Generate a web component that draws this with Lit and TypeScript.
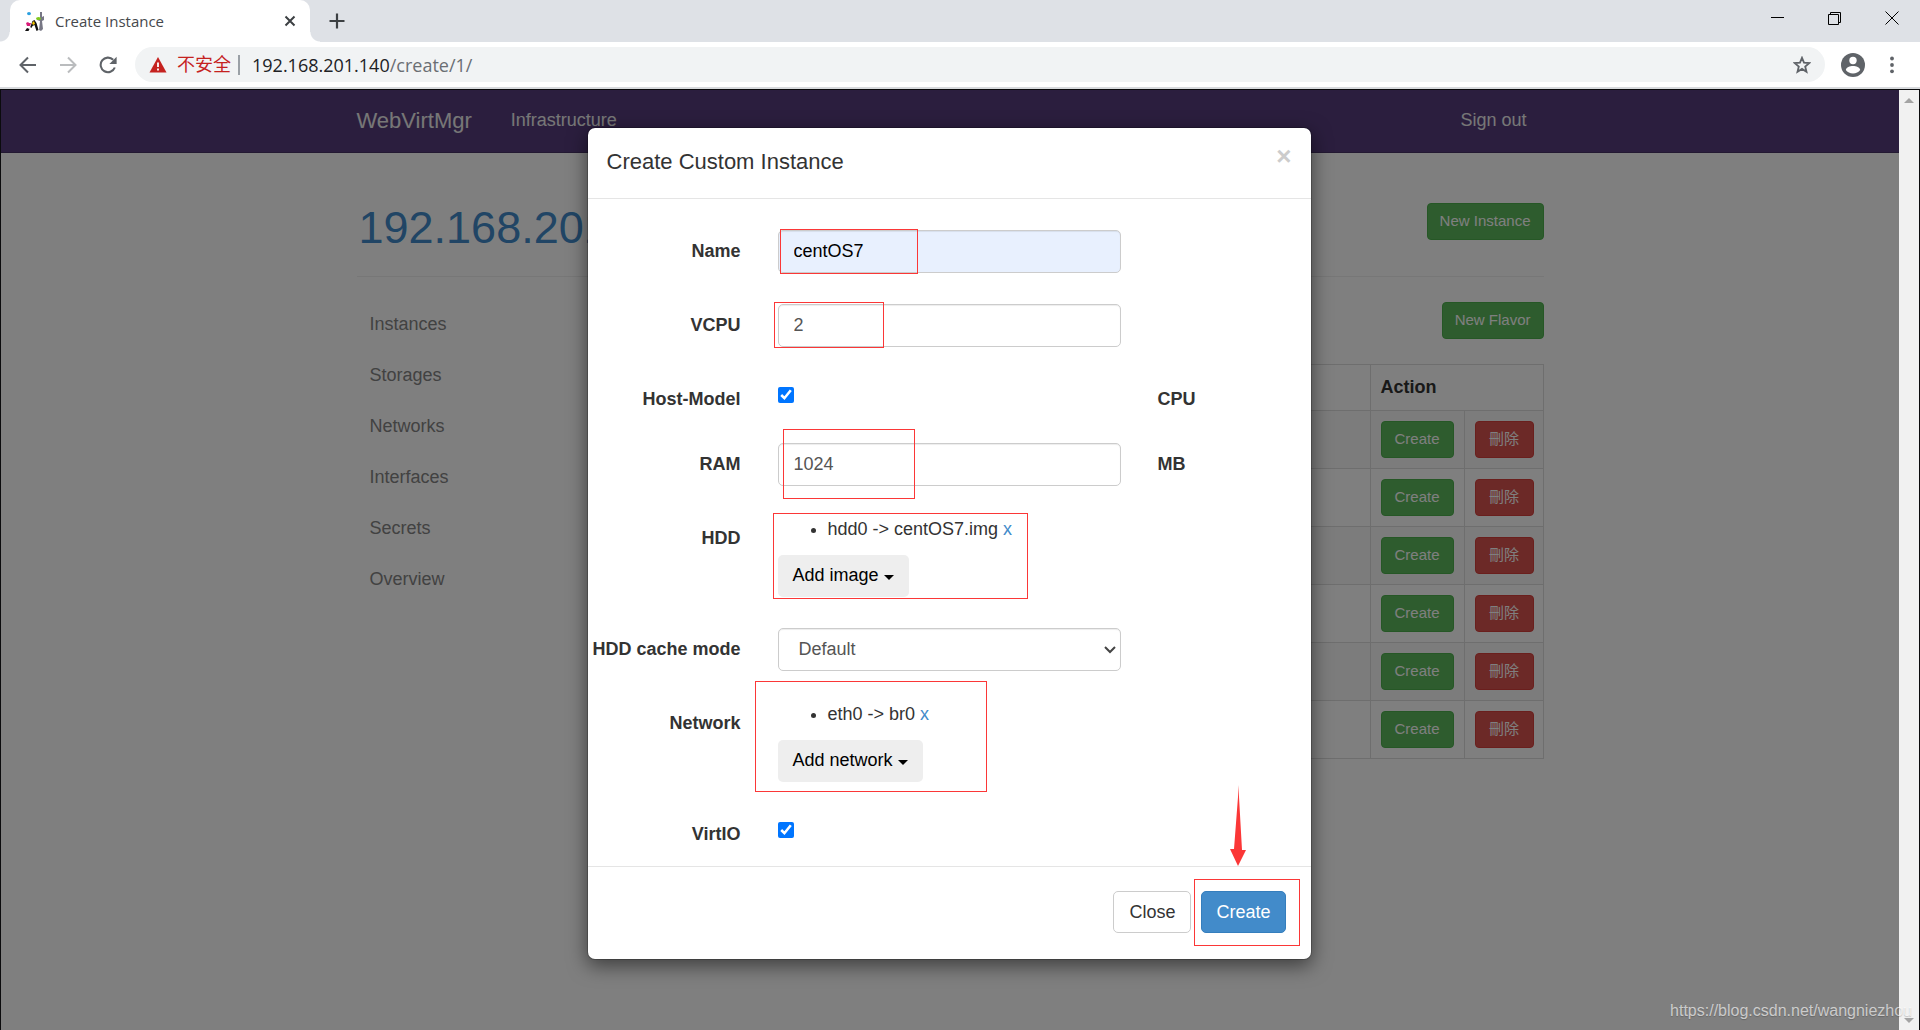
import { LitElement, html, css } from "lit";
import { customElement, state } from "lit/decorators.js";

const SECTIONS = ["Instances", "Storages", "Networks", "Interfaces", "Secrets", "Overview"];
const FLAVORS = [1, 2, 3, 4, 5, 6];

@customElement("browser-chrome")
export class BrowserChrome extends LitElement {
  static styles = css`
    :host {
      display: block;
      flex: none;
      font-family: "Open Sans", "Noto Sans CJK SC", sans-serif;
    }
    button {
      border: 0;
      padding: 0;
      background: none;
      display: flex;
      align-items: center;
      justify-content: center;
      color: #5f6368;
    }
    svg {
      display: block;
    }
    .strip {
      display: flex;
      height: 42px;
      background: #dee1e6;
    }
    .flare {
      width: 10px;
      background: radial-gradient(circle at 0 0, transparent 9px, #fff 10px) 0 100% / 10px 10px no-repeat;
      align-self: stretch;
    }
    .flare.right {
      background-image: radial-gradient(circle at 100% 0, transparent 9px, #fff 10px);
    }
    .tab {
      display: flex;
      align-items: center;
      width: 300px;
      padding: 0 12px 0 14px;
      box-sizing: border-box;
      background: #fff;
      border-radius: 10px 10px 0 0;
      color: #45484c;
      font-size: 15px;
    }
    .title {
      flex: 1;
      padding-left: 10px;
    }
    .close {
      width: 16px;
      height: 16px;
    }
    .plus {
      width: 34px;
    }
    .controls {
      display: flex;
      margin-left: auto;
      height: 36px;
    }
    .controls button {
      width: 57px;
      color: #000;
    }
    .bar {
      display: flex;
      align-items: center;
      padding: 5px 9px 5px 8px;
      background: #fff;
      border-bottom: 2px solid #d8dadd;
    }
    .bar > button {
      width: 40px;
      height: 35px;
    }
    .bar > .menu {
      width: 38px;
    }
    .forward {
      color: #babcbe;
    }
    .omnibox {
      display: flex;
      align-items: center;
      flex: 1;
      height: 35px;
      margin: 0 8px 0 7px;
      padding: 0 14px;
      border-radius: 18px;
      background: #f1f3f4;
      font-size: 18px;
    }
    .warn {
      color: #c5221f;
      padding: 0 7px 0 10px;
      line-height: 25px;
    }
    .url {
      flex: 1;
      padding-left: 12px;
      border-left: 2px solid #9aa0a6;
      line-height: 20px;
      color: #202124;
    }
    .path {
      color: #6a6e73;
    }
  `;

  render() {
    return html`
      <div class="strip">
        <div class="flare"></div>
        <div class="tab">
          <svg width="21" height="21" viewBox="0 0 21 21" aria-hidden="true">
            <path d="M16 1l2 0v5l2-1v4l-2 1 1 8-2 2-2-1 1-9-3-1v-2l3 1z" fill="#777785" />
            <ellipse cx="5" cy="2.600" rx="2" ry="1.600" fill="#2ba0e0" />
            <ellipse cx="14.500" cy="7.500" rx="2.500" ry="1.500" fill="#82c91e" />
            <path d="M2 12l2-1 1 1 2 0-1 3-3 0z" fill="#d81b78" />
            <path d="M5.500 18l3-8 2-1 2 3 2 7-2 1-2-6-2 1-1 2-1-1-2 4H1l2-3z" fill="#111" />
            <path d="M8 12l2-2 1 3-2 1z" fill="#f2c400" />
          </svg>
          <span class="title">Create Instance</span>
          <button class="close" aria-label="Close tab">
            <svg width="12" height="12" viewBox="0 0 12 12"><path d="M1.500 1.500l9 9M10.500 1.500l-9 9" stroke="#3c4043" stroke-width="2" /></svg>
          </button>
        </div>
        <div class="flare right"></div>
        <button class="plus" aria-label="New tab">
          <svg width="16" height="16" viewBox="0 0 16 16"><path d="M8 0.500v15M0.500 8h15" stroke="#3c4043" stroke-width="2.200" /></svg>
        </button>
        <div class="controls">
          <button aria-label="Minimize"><svg width="13" height="13"><path d="M0 5.500h13" stroke="currentColor" /></svg></button>
          <button aria-label="Restore">
            <svg width="13" height="13" fill="none" stroke="currentColor"><path d="M0.500 2.500h10v10h-10zM2.500 2.500v-2h10v10h-2" /></svg>
          </button>
          <button aria-label="Close window"><svg width="14" height="14"><path d="M0.500 0.500l13 13M13.500 0.500l-13 13" stroke="currentColor" /></svg></button>
        </div>
      </div>
      <div class="bar">
        <button aria-label="Back">
          <svg width="18" height="18" viewBox="0 0 18 18" fill="none" stroke="currentColor" stroke-width="2"><path d="M17 9H2M9 1.500L1.500 9 9 16.500" /></svg>
        </button>
        <button class="forward" aria-label="Forward">
          <svg width="18" height="18" viewBox="0 0 18 18" fill="none" stroke="currentColor" stroke-width="2"><path d="M1 9h15M9 1.500L16.500 9 9 16.500" /></svg>
        </button>
        <button aria-label="Reload">
          <svg width="18" height="18" viewBox="0 0 18 18"><path d="M15.800 11.500A7.300 7.300 0 1 1 14.200 3.800" fill="none" stroke="currentColor" stroke-width="2.100" /><path d="M17.600 0.800v7.200h-7.200z" fill="currentColor" /></svg>
        </button>
        <div class="omnibox">
          <svg width="18" height="16" viewBox="0 0 18 16"><path d="M9 0l8.500 15.500H.5z" fill="#c5221f" /><path d="M9 5.500v4.500M9 11.500v2" stroke="#fff" stroke-width="1.800" /></svg>
          <span class="warn">不安全</span>
          <span class="url">192.168.201.140<span class="path">/create/1/</span></span>
          <button aria-label="Bookmark">
            <svg width="18" height="18" viewBox="0 0 18 18"><path d="M9 1.800l2 4.900 5.200.4-4 3.400 1.300 5.200L9 12.900l-4.500 2.800 1.300-5.200-4-3.400 5.200-.4z" fill="none" stroke="currentColor" stroke-width="1.800" /></svg>
          </button>
        </div>
        <button aria-label="Profile">
          <svg width="24" height="24" viewBox="0 0 24 24"><circle cx="12" cy="12" r="12" fill="currentColor" /><circle cx="12" cy="7.500" r="3.700" fill="#fff" /><path d="M4.800 17c.4-2.700 4-4 7.200-4s6.800 1.300 7.200 4c-1.600 2.200-4.200 3.500-7.200 3.500S6.400 19.200 4.800 17z" fill="#fff" /></svg>
        </button>
        <button class="menu" aria-label="Menu">
          <svg width="4" height="18" viewBox="0 0 4 18" fill="currentColor"><circle cx="2" cy="2.500" r="1.900" /><circle cx="2" cy="9" r="1.900" /><circle cx="2" cy="15.300" r="1.900" /></svg>
        </button>
      </div>
    `;
  }
}

@customElement("instance-dialog")
export class InstanceDialog extends LitElement {
  @state() private hostModel = true;
  @state() private virtio = true;

  static styles = css`
    :host {
      display: block;
      position: relative;
      box-sizing: border-box;
      width: 725px;
      max-width: 100%;
      border: 1px solid rgba(0, 0, 0, 0.2);
      border-radius: 8px;
      background: #fff;
      background-clip: padding-box;
      box-shadow: 0 6px 19px rgba(0, 0, 0, 0.5);
      color: #333;
    }
    header {
      display: flex;
      justify-content: space-between;
      align-items: flex-start;
      padding: 18px 19px 21px;
      border-bottom: 1px solid #e5e5e5;
    }
    h4 {
      margin: 0;
      font-size: 22px;
      font-weight: 500;
      line-height: 31px;
    }
    button,
    input,
    select {
      font: inherit;
      box-sizing: border-box;
    }
    .dismiss {
      border: 0;
      padding: 0;
      background: none;
      color: #ccc;
      font-size: 26px;
      font-weight: bold;
      line-height: 20px;
    }
    form {
      display: flex;
      flex-direction: column;
      gap: 31px;
      padding: 31px 0 19px;
    }
    .group {
      display: grid;
      grid-template-columns: 153px 343px 1fr;
      column-gap: 37px;
      align-items: start;
    }
    .label {
      padding-top: 9px;
      line-height: 25px;
      font-weight: bold;
      text-align: right;
      white-space: nowrap;
    }
    .unit {
      text-align: left;
    }
    .control {
      display: block;
      width: 100%;
      height: 43px;
      padding: 0 15px;
      border: 1px solid #ccc;
      border-radius: 5px;
      background: #fff;
      box-shadow: inset 0 1px 1px rgba(0, 0, 0, 0.075);
      color: #555;
    }
    .filled {
      background: #e8f0fe;
      color: #000;
    }
    .select {
      display: grid;
      align-items: center;
    }
    .select > * {
      grid-area: 1 / 1;
    }
    .select select {
      appearance: none;
      padding: 0 20px;
    }
    .select svg {
      justify-self: end;
      margin-right: 5px;
      pointer-events: none;
    }
    .check {
      width: 16px;
      height: 16px;
      margin: 9px 0 0;
      accent-color: #0075ff;
    }
    ul {
      margin: 0 0 13px;
      padding-left: 50px;
      line-height: 25px;
    }
    a {
      color: #428bca;
      text-decoration: none;
    }
    .drop {
      display: inline-flex;
      align-items: center;
      gap: 5px;
      height: 42px;
      padding: 0 15px 2px;
      border: 0;
      border-radius: 5px;
      background: #eee;
      color: #000;
    }
    .caret {
      border-top: 5px solid;
      border-left: 5px solid transparent;
      border-right: 5px solid transparent;
      margin-top: 4px;
    }
    footer {
      display: flex;
      justify-content: flex-end;
      gap: 10px;
      padding: 24px 25px 26px;
      border-top: 1px solid #e5e5e5;
    }
    .btn {
      height: 42px;
      padding: 0 15px;
      border: 1px solid #ccc;
      border-radius: 5px;
      background: #fff;
      color: #333;
    }
    .primary {
      padding: 0 14px;
      border-color: #357ebd;
      background: #428bca;
      color: #fff;
    }
    .mark {
      position: absolute;
      box-sizing: border-box;
      border: 1px solid #fb3737;
      pointer-events: none;
    }
    .mark-name {
      left: 192px;
      top: 101px;
      width: 138px;
      height: 45px;
    }
    .mark-vcpu {
      left: 186px;
      top: 174px;
      width: 110px;
      height: 46px;
    }
    .mark-ram {
      left: 195px;
      top: 301px;
      width: 132px;
      height: 70px;
    }
    .mark-hdd {
      left: 185px;
      top: 385px;
      width: 255px;
      height: 86px;
    }
    .mark-network {
      left: 167px;
      top: 553px;
      width: 232px;
      height: 111px;
    }
    .mark-create {
      right: 11px;
      bottom: 13px;
      width: 106px;
      height: 67px;
    }
    .arrow {
      position: absolute;
      right: 65px;
      bottom: 93px;
    }
  `;

  render() {
    return html`
      <header>
        <h4>Create Custom Instance</h4>
        <button class="dismiss" aria-label="Dismiss">×</button>
      </header>
      <form @submit=${(e: Event) => e.preventDefault()}>
        <div class="group">
          <label class="label" for="name">Name</label>
          <input class="control filled" id="name" type="text" value="centOS7" />
        </div>
        <div class="group">
          <label class="label" for="vcpu">VCPU</label>
          <input class="control" id="vcpu" type="text" value="2" />
        </div>
        <div class="group">
          <label class="label" for="host">Host-Model</label>
          <input class="check" id="host" type="checkbox" .checked=${this.hostModel}
            @change=${() => (this.hostModel = !this.hostModel)} />
          <span class="label unit">CPU</span>
        </div>
        <div class="group">
          <label class="label" for="ram">RAM</label>
          <input class="control" id="ram" type="text" value="1024" />
          <span class="label unit">MB</span>
        </div>
        <div class="group">
          <label class="label" for="hdd">HDD</label>
          <div>
            <ul><li>hdd0 -&gt; centOS7.img <a href="#">x</a></li></ul>
            <button class="drop" id="hdd" type="button">Add image<span class="caret"></span></button>
          </div>
        </div>
        <div class="group">
          <label class="label" for="cache">HDD cache mode</label>
          <div class="select">
            <select class="control" id="cache"><option>Default</option></select>
            <svg width="12" height="8" viewBox="0 0 12 8"><path d="M1 1l5 5 5-5" fill="none" stroke="#444" stroke-width="2" /></svg>
          </div>
        </div>
        <div class="group">
          <label class="label" for="network">Network</label>
          <div>
            <ul><li>eth0 -&gt; br0 <a href="#">x</a></li></ul>
            <button class="drop" id="network" type="button">Add network<span class="caret"></span></button>
          </div>
        </div>
        <div class="group">
          <label class="label" for="virtio">VirtIO</label>
          <input class="check" id="virtio" type="checkbox" .checked=${this.virtio}
            @change=${() => (this.virtio = !this.virtio)} />
        </div>
      </form>
      <footer>
        <button class="btn">Close</button>
        <button class="btn primary">Create</button>
      </footer>
      ${["name", "vcpu", "ram", "hdd", "network", "create"].map((n) => html`<span class="mark mark-${n}"></span>`)}
      <svg class="arrow" width="16" height="81" viewBox="0 0 16 81"><path d="M8.500 0L9 12l3 53h4L8 81 0 64h4l4-52z" fill="#fb3737" /></svg>
    `;
  }
}

@customElement("app-root")
export class AppRoot extends LitElement {
  static styles = css`
    :host {
      display: flex;
      flex-direction: column;
      min-height: 100vh;
      position: relative;
      overflow: hidden;
      background: #fff;
      font: 18px/25px "Liberation Sans", Arial, "Noto Sans CJK TC", sans-serif;
    }
    .frame {
      display: flex;
      flex: 1;
      border: solid #0b0b0d;
      border-width: 1px 1px 0;
    }
    .page {
      position: relative;
      flex: 1;
      min-width: 0;
      color: #333;
    }
    .container {
      max-width: 1187px;
      margin: 0 auto;
    }
    nav.top {
      background: #563d7c;
      border-bottom: 1px solid #463265;
    }
    .top .container {
      display: flex;
      align-items: center;
      box-sizing: border-box;
      height: 62px;
      padding-bottom: 2px;
    }
    .top a {
      color: #eee;
      text-decoration: none;
    }
    .top .brand {
      margin-right: 39px;
      font-size: 22px;
    }
    .top .out {
      margin-left: auto;
      margin-right: 17px;
    }
    .heading {
      display: flex;
      justify-content: space-between;
      align-items: flex-start;
      margin-top: 50px;
      padding: 0 0 23px;
      border-bottom: 1px solid #eee;
    }
    h1 {
      margin: 0;
      padding-left: 2px;
      color: #428bca;
      font-size: 45px;
      font-weight: 500;
      line-height: 50px;
    }
    .columns {
      display: grid;
      grid-template-columns: 240px 1fr;
      column-gap: 38px;
    }
    .side {
      display: flex;
      flex-direction: column;
      padding-top: 22px;
    }
    .side a {
      padding: 13px;
      color: #848484;
      text-decoration: none;
    }
    .main {
      display: flex;
      flex-direction: column;
      align-items: flex-end;
      gap: 25px;
      padding-top: 25px;
    }
    .btn {
      display: inline-block;
      box-sizing: border-box;
      height: 37px;
      padding: 0 12px 2px;
      border: 1px solid #4cae4c;
      border-radius: 4px;
      background: #5cb85c;
      color: #fff;
      font: inherit;
      font-size: 15px;
      vertical-align: top;
    }
    .danger {
      width: 59px;
      border-color: #d43f3a;
      background: #d9534f;
    }
    table {
      width: 100%;
      border-collapse: collapse;
      table-layout: fixed;
    }
    th,
    td {
      padding: 10px;
      border: 1px solid #ddd;
      text-align: left;
    }
    tbody tr:nth-child(odd) {
      background: #f9f9f9;
    }
    .make {
      width: 73px;
    }
    .backdrop {
      position: absolute;
      inset: 0;
      display: flex;
      justify-content: center;
      align-items: flex-start;
      padding: 37px 2px 0 0;
      background: rgba(0, 0, 0, 0.5);
    }
    .scroll {
      display: flex;
      flex-direction: column;
      justify-content: space-between;
      align-items: center;
      width: 20px;
      padding: 8px 0 7px;
      box-sizing: border-box;
      background: #f1f1f1;
    }
    .up,
    .down {
      border: 5px solid transparent;
      border-top: 0;
      border-bottom-color: #a3a3a3;
    }
    .down {
      border-top: 5px solid #a3a3a3;
      border-bottom: 0;
    }
    .watermark {
      position: absolute;
      right: 8px;
      bottom: 7px;
      color: rgba(255, 255, 255, 0.65);
      text-shadow: 0 1px 1px rgba(0, 0, 0, 0.2);
      font-size: 16px;
    }
  `;

  render() {
    return html`
      <browser-chrome></browser-chrome>
      <div class="frame">
        <div class="page">
          <nav class="top">
            <div class="container">
              <a class="brand" href="#">WebVirtMgr</a>
              <a href="#">Infrastructure</a>
              <a class="out" href="#">Sign out</a>
            </div>
          </nav>
          <div class="container">
            <div class="heading">
              <h1>192.168.201.140</h1>
              <button class="btn">New Instance</button>
            </div>
            <div class="columns">
              <nav class="side">${SECTIONS.map((s) => html`<a href="#">${s}</a>`)}</nav>
              <div class="main">
                <button class="btn">New Flavor</button>
                <table>
                  <colgroup>
                    <col />
                    <col width="94" />
                    <col width="79" />
                  </colgroup>
                  <thead>
                    <tr><th></th><th colspan="2">Action</th></tr>
                  </thead>
                  <tbody>
                    ${FLAVORS.map(
                      () => html`<tr>
                        <td></td>
                        <td><button class="btn make">Create</button></td>
                        <td><button class="btn danger">刪除</button></td>
                      </tr>`,
                    )}
                  </tbody>
                </table>
              </div>
            </div>
          </div>
          <div class="backdrop"><instance-dialog role="dialog" aria-label="Create Custom Instance"></instance-dialog></div>
        </div>
        <div class="scroll"><span class="up"></span><span class="down"></span></div>
      </div>
      <span class="watermark">https://blog.csdn.net/wangniezhou</span>
    `;
  }
}
